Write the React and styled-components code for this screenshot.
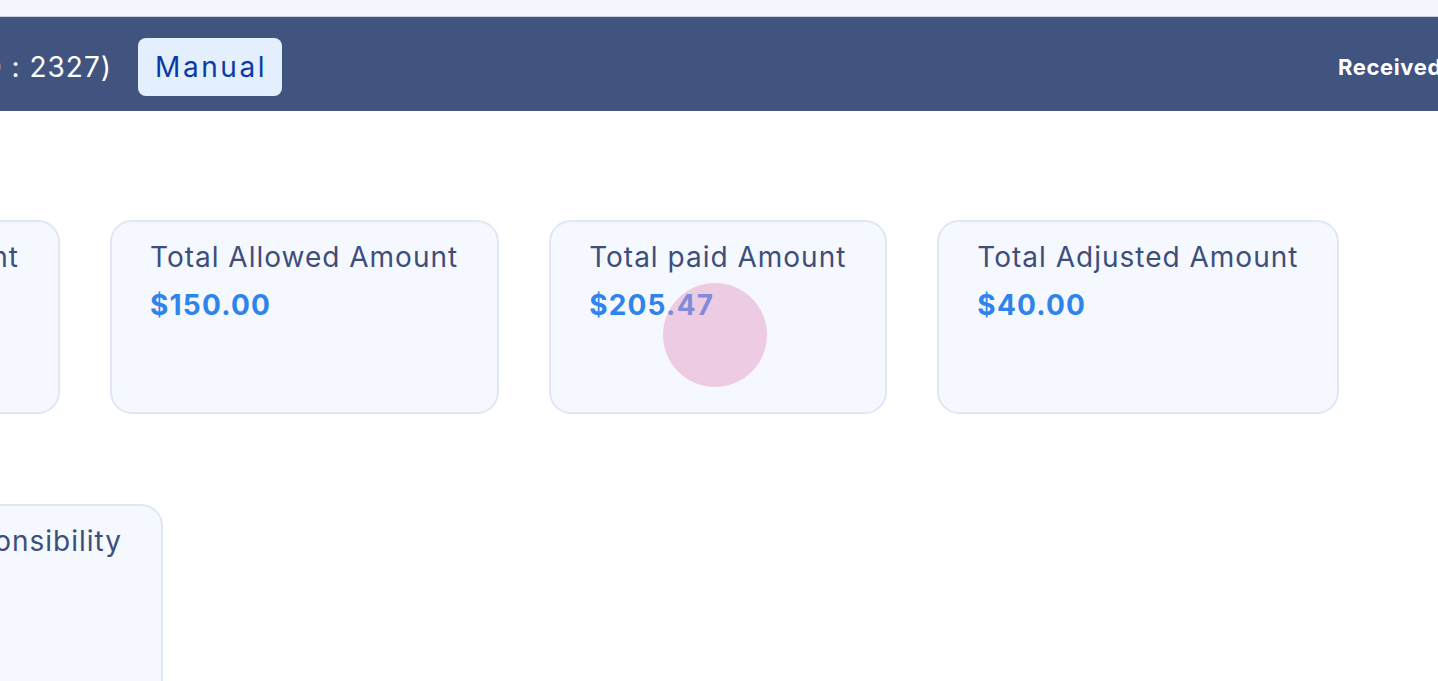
import styled, { createGlobalStyle } from 'styled-components';

const GlobalStyle = createGlobalStyle`
    html, body {
        margin: 0;
        padding: 0;
        background: #ffffff;
        overflow: hidden;
        font-family: Inter, "Noto Sans", "Liberation Sans", sans-serif;
    }
`;

const Page = styled.div`
    width: 100vw;
    height: 681px;
    overflow: hidden;
    background: #ffffff;
`;

const TopStrip = styled.div`
    height: 17px;
    box-sizing: border-box;
    background: #f4f7fd;
    border-bottom: 1px solid #c9d0de;
`;

const Header = styled.div`
    height: 94px;
    box-sizing: border-box;
    padding-top: 21px;
    background: #41547f;
    display: grid;
    grid-template-columns: 1338px 1fr;
    align-items: start;
`;

const HeaderLeft = styled.div`
    display: flex;
    align-items: center;
    gap: 26px;
`;

const Lead = styled.div`
    flex: 0 0 ${p => p.$w}px;
    width: ${p => p.$w}px;
    display: flex;
    justify-content: flex-end;
`;

const HeaderTitle = styled.div`
    color: #ffffff;
    font-size: 28px;
    letter-spacing: 1px;
    white-space: nowrap;
`;

const Badge = styled.div`
    background: #e3effd;
    color: #0b3aa8;
    font-size: 28px;
    letter-spacing: 2.6px;
    line-height: 58px;
    padding: 0 15px 0 17px;
    border-radius: 8px;
    white-space: nowrap;
`;

const Received = styled.div`
    color: #ffffff;
    font-size: 22px;
    font-weight: 700;
    letter-spacing: 0.6px;
    line-height: 58px;
    white-space: nowrap;
`;

const CardRow = styled.div`
    display: flex;
    gap: 50px;
    margin-top: ${p => p.$top}px;
`;

const Card = styled.div`
    position: relative;
    flex: none;
    box-sizing: border-box;
    height: ${p => p.$h || 194}px;
    padding: 18px 39px 0 38px;
    background: #f5f8fe;
    border: 2px solid #e1e6f5;
    border-radius: 22px;
    display: flex;
    flex-direction: column;
`;

const CardTitle = styled.div`
    color: #3d4e7b;
    font-size: 28px;
    letter-spacing: 1px;
    line-height: 34px;
    white-space: nowrap;
`;

const CardValue = styled.div`
    color: #2f84ec;
    font-size: 28px;
    font-weight: 700;
    letter-spacing: 1.2px;
    line-height: 36px;
    margin-top: 13px;
    white-space: nowrap;
`;

const Touch = styled.div`
    position: absolute;
    left: 112px;
    top: 61px;
    width: 104px;
    height: 104px;
    border-radius: 50%;
    background: rgba(228, 150, 196, 0.45);
    pointer-events: none;
`;

const cards = [
    { title: 'Total Billed Amount', value: '$355.47' },
    { title: 'Total Allowed Amount', value: '$150.00' },
    { title: 'Total paid Amount', value: '$205.47', touch: true },
    { title: 'Total Adjusted Amount', value: '$40.00' },
];

const App = () => {
    const [first, ...rest] = cards;
    return (
        <Page>
            <GlobalStyle />
            <TopStrip />
            <Header>
                <HeaderLeft>
                    <Lead $w={112}>
                        <HeaderTitle>Payment Details (Claim ID : 2327)</HeaderTitle>
                    </Lead>
                    <Badge>Manual</Badge>
                </HeaderLeft>
                <Received>Received Date : 03/12/2024</Received>
            </Header>
            <CardRow $top={109}>
                <Lead $w={60}>
                    <Card>
                        <CardTitle>{first.title}</CardTitle>
                        <CardValue>{first.value}</CardValue>
                    </Card>
                </Lead>
                {rest.map(c => (
                    <Card key={c.title}>
                        <CardTitle>{c.title}</CardTitle>
                        <CardValue>{c.value}</CardValue>
                        {c.touch && <Touch />}
                    </Card>
                ))}
            </CardRow>
            <CardRow $top={90}>
                <Lead $w={163}>
                    <Card $h={260}>
                        <CardTitle>Patient Responsibility</CardTitle>
                    </Card>
                </Lead>
            </CardRow>
        </Page>
    );
};

export default App;
